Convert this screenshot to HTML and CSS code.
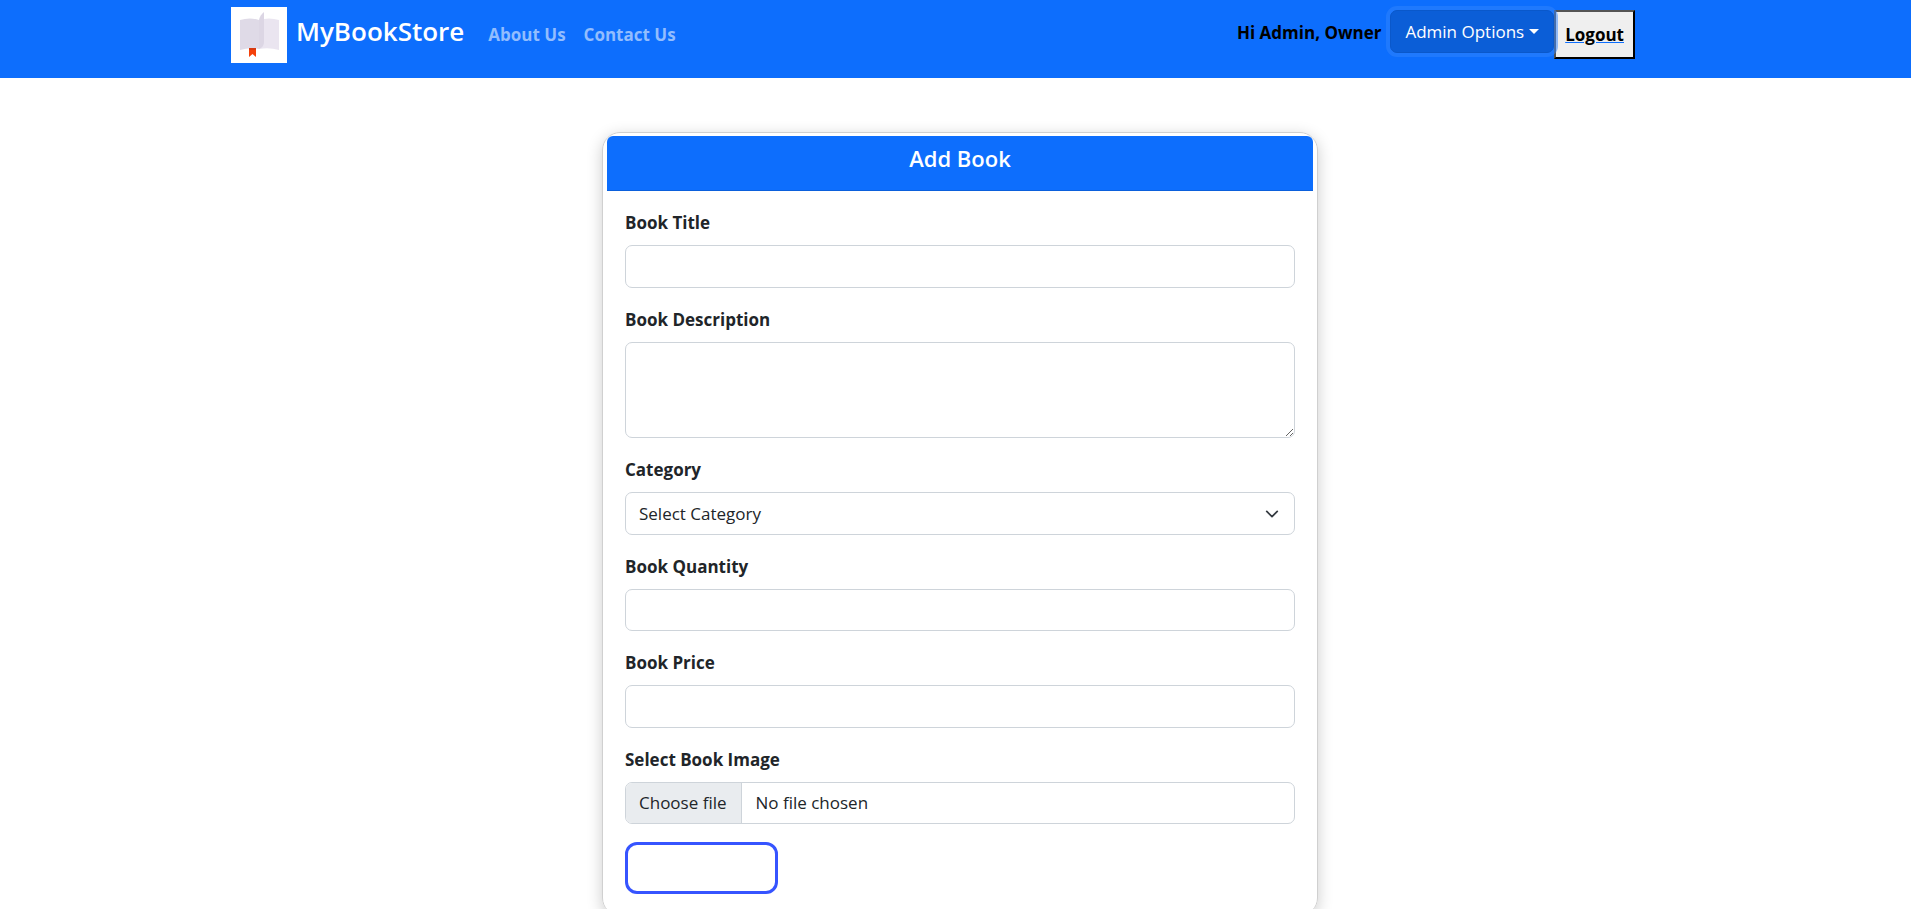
FILE: index.html
```html
<!DOCTYPE html>
<html lang="en">
<head>
<meta charset="utf-8">
<meta name="viewport" content="width=device-width, initial-scale=1">
<title>Add Book</title>
<link rel="stylesheet" href="styles.css">
</head>
<body>
<header class="navbar">
  <div class="container navbar-row">
    <a class="brand" href="#">
      <svg class="brand-logo" viewBox="0 0 56 56" aria-hidden="true">
        <rect width="56" height="56" fill="#fff"/>
        <path d="M9 13Q19 10 28 13V42Q19 40 9 43Z" fill="#dfdae7"/>
        <path d="M28 13Q38 10 48 13V43Q38 40 28 42Z" fill="#eae5f0"/>
        <path d="M28 42V13Q29 8 33 5V35Q33 40 28 42Z" fill="#dcd6e4"/>
        <path d="M18 41H25V50L21.500 47L18 50Z" fill="#f4410b"/>
        <path d="M18 41H25V43H18Z" fill="#d93a10"/>
      </svg>
      <span class="brand-name">MyBookStore</span>
    </a>
    <nav class="nav-links">
      <a href="#">About Us</a>
      <a href="#">Contact Us</a>
    </nav>
    <div class="account">
      <span class="greeting">Hi Admin, Owner</span>
      <button class="btn-dropdown" type="button">Admin Options<span class="caret"></span></button>
      <button class="btn-logout" type="button"><span>Logout</span></button>
    </div>
  </div>
</header>
<main class="container page">
  <section class="card">
    <h1 class="card-header">Add Book</h1>
    <form class="card-body">
      <div class="field">
        <label for="title">Book Title</label>
        <input class="control" id="title" type="text">
      </div>
      <div class="field">
        <label for="description">Book Description</label>
        <textarea class="control" id="description" rows="3"></textarea>
      </div>
      <div class="field">
        <label for="category">Category</label>
        <div class="select-wrap">
          <select class="control" id="category"><option>Select Category</option></select>
          <svg class="chevron" viewBox="0 0 16 16" aria-hidden="true"><path d="m2 5 6 6 6-6" fill="none" stroke="#343a40" stroke-width="2" stroke-linecap="round" stroke-linejoin="round"/></svg>
        </div>
      </div>
      <div class="field">
        <label for="quantity">Book Quantity</label>
        <input class="control control-number" id="quantity" type="text" inputmode="numeric">
      </div>
      <div class="field">
        <label for="price">Book Price</label>
        <input class="control" id="price" type="text" inputmode="decimal">
      </div>
      <div class="field">
        <label for="image">Select Book Image</label>
        <div class="file-box">
          <span class="file-button">Choose file</span>
          <span class="file-name">No file chosen</span>
          <input class="file-input" id="image" type="file">
        </div>
      </div>
      <button class="btn-submit" type="submit" aria-label="Add book"></button>
    </form>
  </section>
</main>
</body>
</html>
```

FILE: styles.css
```css
* {
  box-sizing: border-box;
}

body {
  margin: 0;
  background: #fff;
  color: #212529;
  font-family: "Segoe UI", "Open Sans", sans-serif;
  font-size: 17px;
  line-height: 27px;
}

button,
input,
select,
textarea {
  font: inherit;
  color: inherit;
}

.container {
  max-width: 1485px;
  margin: 0 auto;
}

.navbar {
  background: #0d6efd;
  padding: 7px 0 15px;
}

.navbar-row {
  display: flex;
  align-items: center;
  padding: 0 63px 0 18px;
}

.brand {
  display: flex;
  gap: 9px;
  color: #fff;
  text-decoration: none;
}

.brand-logo {
  width: 56px;
  height: 56px;
}

.brand-name {
  font-size: 26px;
  font-weight: 600;
  line-height: 48px;
}

.nav-links {
  display: flex;
  gap: 18px;
  margin-left: 24px;
}

.nav-links a {
  color: #92bdfe;
  font-weight: 700;
  line-height: 25px;
  padding-bottom: 2px;
  text-decoration: none;
}

.account {
  display: flex;
  align-items: flex-start;
  margin-left: auto;
  padding-bottom: 2px;
}

.greeting {
  margin-right: 9px;
  color: #000;
  font-weight: 700;
  line-height: 45px;
}

.btn-dropdown {
  display: flex;
  align-items: center;
  gap: 5px;
  position: relative;
  z-index: 1;
  padding: 7px 14px;
  border: 1px solid #0a58ca;
  border-radius: 7px;
  background: #0b5ed7;
  color: #fff;
  box-shadow: 0 0 0 4px rgba(49, 132, 253, 0.5);
}

.caret {
  border: 5px solid transparent;
  border-top-color: #fff;
  border-bottom: 0;
}

.btn-logout {
  padding: 9px;
  border: 2px outset #000;
  background: #efefef;
  color: #000;
  font-weight: 700;
}

.btn-logout span {
  text-decoration: underline;
  text-decoration-color: #0d6efd;
}

.page {
  display: flex;
  justify-content: center;
  padding: 54px 0 18px 9px;
}

.card {
  width: 100%;
  max-width: 716px;
  padding: 3px 4px;
  border: 1px solid #d0d0d0;
  border-radius: 18px;
  box-shadow: 0 4px 16px rgba(0, 0, 0, 0.2);
}

.card-header {
  margin: 0;
  padding: 9px 18px 18px;
  border-bottom: 1px solid #0b60dc;
  border-radius: 6px 6px 0 0;
  background: #0d6efd;
  color: #fff;
  font-size: 22px;
  font-weight: 600;
  line-height: 27px;
  text-align: center;
}

.card-body {
  display: flex;
  flex-direction: column;
  gap: 18px;
  padding: 18px;
}

.field {
  display: flex;
  flex-direction: column;
  gap: 9px;
}

.field label {
  font-weight: 700;
}

.control {
  display: block;
  width: 100%;
  height: 43px;
  padding: 7px 13px;
  border: 1px solid #ced4da;
  border-radius: 7px;
  background: #fff;
}

.control-number {
  height: 42px;
}

textarea.control {
  height: 96px;
}

.select-wrap {
  position: relative;
}

select.control {
  appearance: none;
}

.chevron {
  position: absolute;
  top: 15px;
  right: 16px;
  width: 14px;
  height: 14px;
  pointer-events: none;
}

.file-box {
  display: flex;
  position: relative;
  overflow: hidden;
  border: 1px solid #ced4da;
  border-radius: 7px;
}

.file-button {
  padding: 6px 14px 7px 13px;
  border-right: 1px solid #ced4da;
  background: #e9ecef;
}

.file-name {
  padding: 6px 14px 7px;
}

.file-input {
  position: absolute;
  inset: 0;
  width: 100%;
  opacity: 0;
}

.btn-submit {
  width: 153px;
  height: 52px;
  border: 3px solid #3654ff;
  border-radius: 12px;
  background: #fff;
}
```
